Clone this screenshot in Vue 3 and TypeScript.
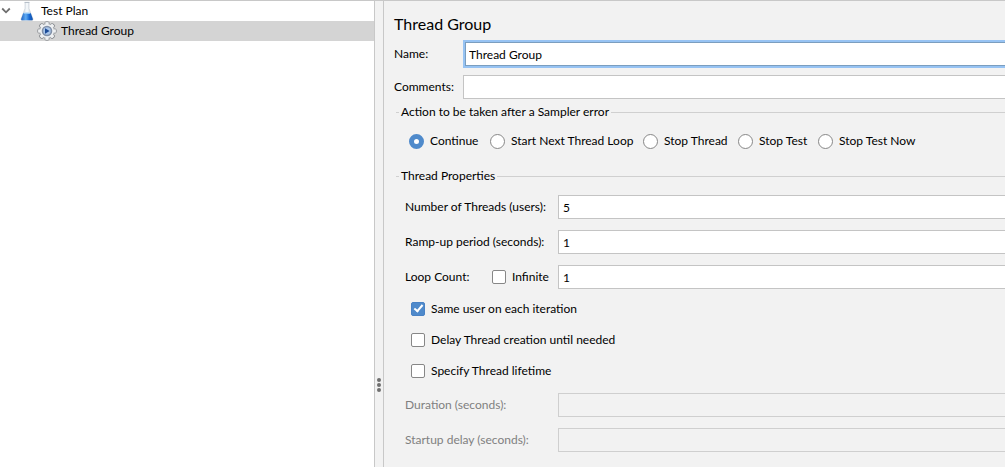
<script setup lang="ts">
import { ref } from 'vue'

const name = ref('Thread Group')
const comments = ref('')
const errorAction = ref('Continue')
const errorActions: string[] = ['Continue', 'Start Next Thread Loop', 'Stop Thread', 'Stop Test', 'Stop Test Now']
const threads = ref('5')
const rampUp = ref('1')
const loops = ref('1')
const infinite = ref(false)
const sameUser = ref(true)
const delayCreation = ref(false)
const lifetime = ref(false)
const duration = ref('')
const startupDelay = ref('')
const toothAngles: number[] = [0, 45, 90, 135, 180, 225, 270, 315]
</script>

<template>
  <div class="window">
    <nav class="tree" aria-label="Test plan tree">
      <button class="node" type="button">
        <svg class="arrow" width="10" height="8" viewBox="0 0 10 8" aria-hidden="true">
          <path d="M1.2 1.5 5 5.3 8.8 1.5" fill="none" stroke="#6e6e6e" stroke-width="1.8" />
        </svg>
        <svg class="icon" width="20" height="20" viewBox="0 0 20 20" aria-hidden="true">
          <defs>
            <linearGradient id="liquid" x1="0" x2="1">
              <stop offset="0" stop-color="#1c62c4" />
              <stop offset=".4" stop-color="#5fabf2" />
              <stop offset=".7" stop-color="#1768d2" />
              <stop offset="1" stop-color="#1253ac" />
            </linearGradient>
            <linearGradient id="glass" x1="0" x2="1">
              <stop offset="0" stop-color="#b9c4cf" />
              <stop offset=".5" stop-color="#f8fbfd" />
              <stop offset="1" stop-color="#b4c0cc" />
            </linearGradient>
          </defs>
          <path d="M8 1.500h4v6L16 18q.3 1.500-1 1.500H5q-1.300 0-1-1.500L8 7.500z" fill="url(#glass)" stroke="#c3cbd3" stroke-width=".6" />
          <path d="M6.300 12q3.700 1.200 7.400 0L15.800 18q.2 1.300-1 1.300H5.200q-1.200 0-1-1.300z" fill="url(#liquid)" />
          <ellipse cx="10" cy="12.200" rx="3.500" ry=".8" fill="#8dc4f6" />
          <path d="M7.500 1.400h5" stroke="#b3bcc6" />
        </svg>
        <span>Test Plan</span>
      </button>
      <button class="node child selected" type="button">
        <svg class="icon" width="20" height="20" viewBox="0 0 20 20" aria-hidden="true">
          <rect
            v-for="angle in toothAngles"
            :key="angle"
            x="8"
            y=".8"
            width="4"
            height="4"
            rx="1"
            fill="#eef0f2"
            stroke="#8d9094"
            :transform="`rotate(${angle} 10 10)`"
          />
          <circle cx="10" cy="10" r="7.300" fill="#eef0f2" stroke="#a0a3a7" stroke-width=".8" />
          <rect
            v-for="angle in toothAngles"
            :key="angle + 360"
            x="8.500"
            y="1.400"
            width="3"
            height="3"
            fill="#eef0f2"
            :transform="`rotate(${angle} 10 10)`"
          />
          <circle cx="10" cy="10" r="4.500" fill="#a9c6ea" stroke="#8291a8" stroke-width="1.600" />
          <path d="M8 7.200 12.600 10 8 12.800z" fill="#1b4a96" />
        </svg>
        <span>Thread Group</span>
      </button>
    </nav>

    <div class="divider" role="separator" aria-orientation="vertical">
      <i></i><i></i><i></i>
    </div>

    <main class="panel">
      <h1>Thread Group</h1>
      <div class="head-row">
        <label for="name">Name:</label>
        <input id="name" v-model="name" class="text active" type="text" />
      </div>
      <div class="head-row comments">
        <label for="comments">Comments:</label>
        <input id="comments" v-model="comments" class="text" type="text" />
      </div>

      <fieldset>
        <legend>Action to be taken after a Sampler error</legend>
        <div class="radios">
          <label v-for="action in errorActions" :key="action">
            <input v-model="errorAction" type="radio" name="error-action" :value="action" />
            <span>{{ action }}</span>
          </label>
        </div>
      </fieldset>

      <fieldset>
        <legend>Thread Properties</legend>
        <div class="properties">
          <div class="row">
            <label for="threads">Number of Threads (users):</label>
            <input id="threads" v-model="threads" class="text" type="text" />
          </div>
          <div class="row">
            <label for="ramp">Ramp-up period (seconds):</label>
            <input id="ramp" v-model="rampUp" class="text" type="text" />
          </div>
          <div class="row">
            <div class="loop">
              <label for="loops">Loop Count:</label>
              <label class="check">
                <input v-model="infinite" type="checkbox" />
                <span>Infinite</span>
              </label>
            </div>
            <input id="loops" v-model="loops" class="text" type="text" />
          </div>
          <div class="checks">
            <label class="check"><input v-model="sameUser" type="checkbox" /><span>Same user on each iteration</span></label>
            <label class="check"><input v-model="delayCreation" type="checkbox" /><span>Delay Thread creation until needed</span></label>
            <label class="check"><input v-model="lifetime" type="checkbox" /><span>Specify Thread lifetime</span></label>
          </div>
          <div class="row" :class="{ off: !lifetime }">
            <label for="duration">Duration (seconds):</label>
            <input id="duration" v-model="duration" class="text" type="text" :disabled="!lifetime" />
          </div>
          <div class="row" :class="{ off: !lifetime }">
            <label for="startup">Startup delay (seconds):</label>
            <input id="startup" v-model="startupDelay" class="text" type="text" :disabled="!lifetime" />
          </div>
        </div>
      </fieldset>
    </main>
  </div>
</template>

<style>
body {
  background: #f2f2f2;
}
</style>

<style scoped>
* {
  box-sizing: border-box;
}
.window {
  display: flex;
  min-height: 100vh;
  border-top: 1px solid #c8c8c8;
  background: #f2f2f2;
  color: #000;
  font: 12px/20px "Segoe UI", Lato, "Open Sans", sans-serif;
  white-space: nowrap;
}
.tree {
  flex: 0 0 375px;
  border-right: 1px solid #c8c8c8;
  background: #fff;
}
.node {
  display: flex;
  align-items: center;
  width: 100%;
  height: 20px;
  padding: 0 0 0 1px;
  border: 0;
  background: none;
  color: inherit;
  font: inherit;
}
.child {
  padding-left: 37px;
}
.selected {
  background: #d4d4d4;
}
.arrow {
  margin-right: 6px;
}
.icon {
  margin-right: 4px;
}
.divider {
  flex: 0 0 9px;
  display: flex;
  flex-direction: column;
  align-items: center;
  gap: 1px;
  padding-top: 377px;
  border-right: 1px solid #c8c8c8;
}
.divider i {
  width: 4px;
  height: 4px;
  border-radius: 2px;
  background: #707070;
}
.panel {
  flex: 1;
  min-width: 0;
  padding: 11px 0 15px 10px;
}
h1 {
  margin: 0 0 4px;
  font-size: 16px;
  line-height: 24px;
  font-weight: 400;
}
.head-row {
  display: grid;
  grid-template-columns: 69px 1fr;
  align-items: center;
}
.comments {
  margin-top: 7px;
}
.text {
  width: 100%;
  height: 24px;
  min-width: 0;
  padding: 0 4px;
  border: 1px solid #c4c4c4;
  border-right: 0;
  border-radius: 0;
  outline: 0;
  background: #fff;
  color: #000;
  font: inherit;
}
.text.active {
  height: 28px;
  border: 2px solid #97c3f3;
  border-right: 0;
  box-shadow: inset 1px 1px #7b9ebf, inset 0 -1px #7b9ebf;
}
.text:disabled {
  border-color: #cfcfcf;
  background: #f2f2f2;
}
fieldset {
  min-width: 0;
  margin: 3px 0 0 2px;
  padding: 0;
  border: 0;
  border-top: 1px solid #d0d0d0;
}
legend {
  margin-left: 3px;
  padding: 0 2px;
}
.radios {
  display: grid;
  grid-template-columns: 81px 153px 95px 80px auto;
  padding: 9px 0 12px 13px;
}
.radios label,
.check {
  display: flex;
  align-items: center;
  gap: 6px;
}
input[type="radio"],
input[type="checkbox"] {
  appearance: none;
  flex: none;
  margin: 0;
  border: 1px solid #878787;
  background: #fff;
}
input[type="radio"] {
  width: 15px;
  height: 15px;
  border-radius: 50%;
}
input[type="radio"]:checked {
  border: 5px solid #4f8acb;
}
input[type="checkbox"] {
  width: 14px;
  height: 14px;
  border-radius: 2px;
}
input[type="checkbox"]:checked {
  display: flex;
  justify-content: center;
  border-color: #4982c5;
  background: #4f8acb;
}
input[type="checkbox"]:checked::before {
  content: "";
  width: 3px;
  height: 7px;
  border: solid #fff;
  border-width: 0 2px 2px 0;
  transform: rotate(40deg);
}
.properties {
  display: grid;
  gap: 11px;
  padding: 9px 0 0 9px;
}
.row {
  display: grid;
  grid-template-columns: 153px 1fr;
  align-items: center;
}
.loop {
  display: grid;
  grid-template-columns: 87px auto;
}
.checks {
  display: grid;
  gap: 11px;
  margin: -1px 0 1px;
  padding-left: 6px;
}
.off {
  color: #808080;
}
</style>
